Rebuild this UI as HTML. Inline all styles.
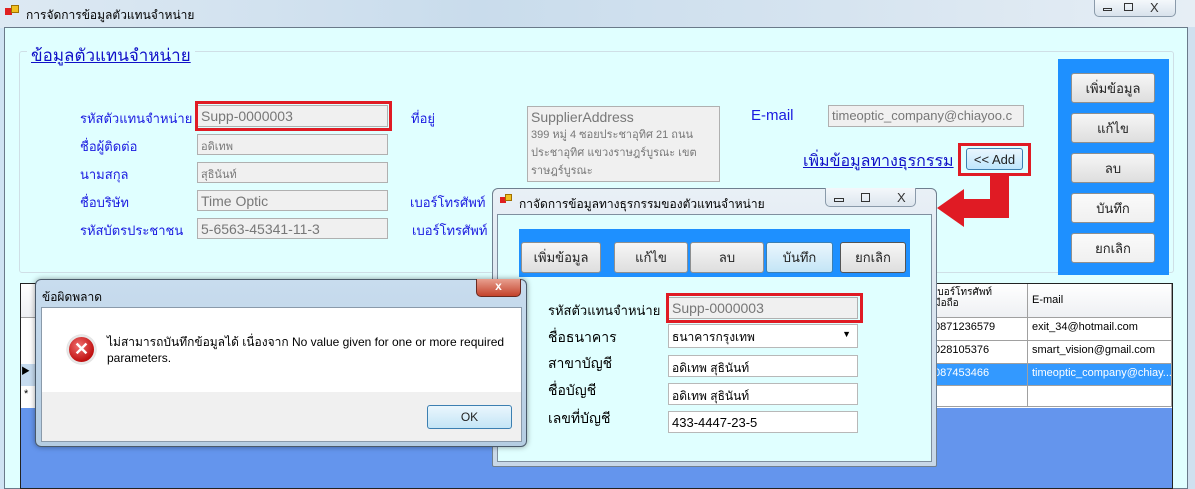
<!DOCTYPE html>
<html><head><meta charset="utf-8"><style>
*{box-sizing:border-box;margin:0;padding:0}
body{width:1195px;height:489px;overflow:hidden;position:relative;background:#cfe3f3;font-family:"Liberation Sans","Noto Sans CJK SC",sans-serif;font-size:13px}
.a{position:absolute}
.lbl{position:absolute;color:#1a1ae0;font-size:14px;white-space:nowrap}
.m{font-size:13px}
.tb{position:absolute;background:#f0f0f0;border:1px solid #b0b0b0;color:#777;font-size:13px;padding:2px 3px;white-space:nowrap;overflow:hidden}
.tw{position:absolute;background:#fff;border:1px solid #b8b8b8;color:#000;font-size:12px;padding:3px 3px;white-space:nowrap}
.btn{position:absolute;background:linear-gradient(#f6f6f6,#dedede);border:1px solid #8e8f8f;border-radius:3px;text-align:center;font-size:13px;color:#222;display:flex;align-items:center;justify-content:center}
.red{position:absolute;border:3px solid #e01b24}
.cell{position:absolute;border-right:1px solid #a0a0a0;border-bottom:1px solid #a0a0a0;font-size:11px;padding:3px 4px;white-space:nowrap;overflow:hidden;background:#fff}
</style></head><body>
<div class="a" style="left:0;top:0;width:1195px;height:28px;background:linear-gradient(90deg,#dde9f3,#c9dcec 40%,#d6e4f0 70%,#e6eef5)"></div>
<div class="a" style="top:8px;left:5px;width:7px;height:7px;background:#e02020"></div>
<div class="a" style="left:11px;top:5px;width:8px;height:8px;background:#f0c020;border:1px solid #a07000"></div>
<div class="a" style="left:26px;top:6px;font-size:12px;color:#000">การจัดการข้อมูลตัวแทนจำหน่าย</div>
<div class="a" style="left:1094px;top:0;width:82px;height:17px;border:1px solid #8a9aaa;border-top:none;border-radius:0 0 5px 5px;background:linear-gradient(#f4f8fb,#d8e2ec)"></div>
<div class="a" style="left:1103px;top:8px;width:9px;height:3px;border:1px solid #333"></div>
<div class="a" style="left:1124px;top:3px;width:9px;height:8px;border:1px solid #333"></div>
<div class="a" style="left:1150px;top:0;font-size:13px;color:#333">X</div>
<div class="a" style="left:4px;top:27px;width:1184px;height:462px;background:#e0ffff;border:1px solid #6a7a8a"></div>
<div class="a" style="left:1188px;top:27px;width:7px;height:462px;background:#cfe0ef"></div>
<div class="a" style="left:19px;top:51px;width:1155px;height:222px;border:1px solid #cfdfe6;border-radius:3px"></div>
<div class="a" style="left:27px;top:42px;padding:0 4px;background:#e0ffff;color:#1010c8;font-size:17px;text-decoration:underline">ข้อมูลตัวแทนจำหน่าย</div>
<div class="lbl m" style="left:80px;top:108px">รหัสตัวแทนจำหน่าย</div>
<div class="lbl m" style="left:80px;top:136px">ชื่อผู้ติดต่อ</div>
<div class="lbl m" style="left:80px;top:164px">นามสกุล</div>
<div class="lbl m" style="left:80px;top:192px">ชื่อบริษัท</div>
<div class="lbl m" style="left:80px;top:220px">รหัสบัตรประชาชน</div>
<div class="tb" style="left:197px;top:105px;width:191px;height:22px;font-size:14px">Supp-0000003</div>
<div class="red" style="left:195px;top:101px;width:197px;height:30px"></div>
<div class="tb" style="left:197px;top:134px;width:191px;height:21px;font-size:11px">อดิเทพ</div>
<div class="tb" style="left:197px;top:162px;width:191px;height:21px;font-size:11px">สุธินันท์</div>
<div class="tb" style="left:197px;top:190px;width:191px;height:21px;font-size:14px">Time Optic</div>
<div class="tb" style="left:197px;top:218px;width:191px;height:21px;font-size:14px">5-6563-45341-11-3</div>
<div class="lbl m" style="left:411px;top:108px">ที่อยู่</div>
<div class="lbl m" style="left:410px;top:192px">เบอร์โทรศัพท์</div>
<div class="lbl m" style="left:412px;top:220px">เบอร์โทรศัพท์</div>
<div class="tb" style="left:527px;top:106px;width:193px;height:76px;font-size:14px;white-space:normal;line-height:16px">SupplierAddress<br><span style="font-size:11px">399 หมู่ 4 ซอยประชาอุทิศ 21 ถนน ประชาอุทิศ แขวงราษฎร์บูรณะ เขต ราษฎร์บูรณะ</span></div>
<div class="lbl" style="left:751px;top:107px;font-size:15px">E-mail</div>
<div class="tb" style="left:828px;top:105px;width:196px;height:22px;font-size:13px">timeoptic_company@chiayoo.c</div>
<div class="a" style="left:803px;top:149px;color:#1010c8;font-size:16px;text-decoration:underline;white-space:nowrap">เพิ่มข้อมูลทางธุรกรรม</div>
<div class="red" style="left:958px;top:143px;width:73px;height:33px"></div>
<div class="btn" style="left:966px;top:148px;width:57px;height:22px;border-color:#3c7fb1;background:linear-gradient(#eaf6fd,#bee6fd);font-size:13px">&lt;&lt; Add</div>
<div class="a" style="left:990px;top:175px;width:19px;height:43px;background:#e01b24"></div>
<div class="a" style="left:962px;top:199px;width:47px;height:19px;background:#e01b24"></div>
<div class="a" style="left:937px;top:189px;width:0;height:0;border-top:19px solid transparent;border-bottom:19px solid transparent;border-right:27px solid #e01b24"></div>
<div class="a" style="left:1058px;top:59px;width:111px;height:216px;background:#1e90ff"></div>
<div class="btn" style="left:1071px;top:73px;width:84px;height:30px">เพิ่มข้อมูล</div>
<div class="btn" style="left:1071px;top:113px;width:84px;height:30px">แก้ไข</div>
<div class="btn" style="left:1071px;top:153px;width:84px;height:30px">ลบ</div>
<div class="btn" style="left:1071px;top:193px;width:84px;height:30px;background:linear-gradient(#fafafa,#f0f0f0)">บันทึก</div>
<div class="btn" style="left:1071px;top:233px;width:84px;height:30px;background:linear-gradient(#fafafa,#f0f0f0)">ยกเลิก</div>
<div class="a" style="left:20px;top:283px;width:1153px;height:206px;background:#6495ed;border:1px solid #222"></div>
<div class="a" style="left:21px;top:284px;width:1151px;height:34px;background:linear-gradient(#fff,#eef0f3);border-bottom:1px solid #a0a0a0"></div>
<div class="cell" style="left:930px;top:284px;width:98px;height:34px;background:transparent;font-size:10px;line-height:11px">เบอร์โทรศัพท์<br>มือถือ</div>
<div class="cell" style="left:1028px;top:284px;width:144px;height:34px;background:transparent;padding-top:10px">E-mail</div>
<div class="a" style="left:21px;top:318px;width:1151px;height:90px;background:#fff"></div>
<div class="cell" style="left:930px;top:318px;width:98px;height:23px">0871236579</div>
<div class="cell" style="left:1028px;top:318px;width:144px;height:23px">exit_34@hotmail.com</div>
<div class="cell" style="left:930px;top:341px;width:98px;height:23px">028105376</div>
<div class="cell" style="left:1028px;top:341px;width:144px;height:23px">smart_vision@gmail.com</div>
<div class="cell" style="left:930px;top:364px;width:98px;height:22px;background:#3399ff;color:#fff">087453466</div>
<div class="cell" style="left:1028px;top:364px;width:144px;height:22px;background:#3399ff;color:#fff">timeoptic_company@chiay...</div>
<div class="cell" style="left:930px;top:386px;width:98px;height:21px"></div>
<div class="cell" style="left:1028px;top:386px;width:144px;height:21px"></div>
<div class="a" style="left:21px;top:364px;width:14px;height:22px;background:#c7dcf0;font-size:9px">▶</div>
<div class="a" style="left:24px;top:388px;font-size:11px">*</div>
<div class="a" style="left:492px;top:188px;width:445px;height:279px;background:linear-gradient(#e9f0f6,#c8d8e8);border:1px solid #6f7f8f;border-radius:6px 6px 2px 2px"></div>
<div class="a" style="left:500px;top:197px;width:6px;height:6px;background:#e02020"></div>
<div class="a" style="left:505px;top:194px;width:7px;height:7px;background:#f0c020;border:1px solid #a07000"></div>
<div class="a" style="left:519px;top:195px;font-size:12px;color:#000;white-space:nowrap">กาจัดการข้อมูลทางธุรกรรมของตัวแทนจำหน่าย</div>
<div class="a" style="left:825px;top:188px;width:91px;height:19px;border:1px solid #8a9aaa;border-top:none;border-radius:0 0 5px 5px;background:linear-gradient(#f4f8fb,#dde6ee)"></div>
<div class="a" style="left:834px;top:198px;width:10px;height:4px;border:1px solid #333"></div>
<div class="a" style="left:861px;top:193px;width:9px;height:9px;border:1px solid #333"></div>
<div class="a" style="left:897px;top:190px;font-size:13px;color:#333">X</div>
<div class="a" style="left:497px;top:214px;width:435px;height:248px;background:#e0ffff;border:1px solid #7f8f9f"></div>
<div class="a" style="left:519px;top:229px;width:391px;height:48px;background:#1e90ff"></div>
<div class="btn" style="left:521px;top:242px;width:80px;height:31px">เพิ่มข้อมูล</div>
<div class="btn" style="left:614px;top:242px;width:74px;height:31px">แก้ไข</div>
<div class="btn" style="left:690px;top:242px;width:74px;height:31px">ลบ</div>
<div class="btn" style="left:766px;top:242px;width:67px;height:31px;border-color:#3c7fb1;background:linear-gradient(#eaf6fd,#c4e5f6)">บันทึก</div>
<div class="btn" style="left:840px;top:242px;width:66px;height:31px;border-color:#555">ยกเลิก</div>
<div class="lbl m" style="left:548px;top:300px;color:#000">รหัสตัวแทนจำหน่าย</div>
<div class="lbl" style="left:548px;top:327px;color:#000">ชื่อธนาคาร</div>
<div class="lbl" style="left:548px;top:353px;color:#000">สาขาบัญชี</div>
<div class="lbl" style="left:548px;top:380px;color:#000">ชื่อบัญชี</div>
<div class="lbl" style="left:548px;top:408px;color:#000">เลขที่บัญชี</div>
<div class="tb" style="left:668px;top:297px;width:190px;height:22px;font-size:14px">Supp-0000003</div>
<div class="red" style="left:666px;top:293px;width:197px;height:30px"></div>
<div class="tw" style="left:668px;top:324px;width:190px;height:24px">ธนาคารกรุงเทพ<span style="position:absolute;right:6px;top:4px;font-size:9px">▼</span></div>
<div class="tw" style="left:668px;top:355px;width:190px;height:22px">อดิเทพ สุธินันท์</div>
<div class="tw" style="left:668px;top:383px;width:190px;height:22px">อดิเทพ สุธินันท์</div>
<div class="tw" style="left:668px;top:411px;width:190px;height:22px;font-size:13px">433-4447-23-5</div>
<div class="a" style="left:35px;top:279px;width:492px;height:168px;background:linear-gradient(#c8dcee,#b5cde2);border:1px solid #4a5a6a;border-radius:6px;box-shadow:0 0 6px rgba(0,0,0,.4)"></div>
<div class="a" style="left:42px;top:288px;font-size:12px;color:#000">ข้อผิดพลาด</div>
<div class="a" style="left:476px;top:279px;width:45px;height:18px;background:linear-gradient(#e8a090,#c4432b);border:1px solid #6a2a20;border-top:none;border-radius:0 0 5px 5px;color:#fff;font-weight:bold;text-align:center;font-size:12px">x</div>
<div class="a" style="left:41px;top:307px;width:481px;height:135px;background:#f0f0f0;border:1px solid #8a9aaa"></div>
<div class="a" style="left:42px;top:308px;width:479px;height:84px;background:#fff"></div>
<div class="a" style="left:67px;top:335px;width:29px;height:29px;border-radius:50%;background:radial-gradient(circle at 40% 35%,#f07070,#c01010 70%);border:2px solid #e8e8e8;box-shadow:0 0 1px #777;color:#fff;font-weight:bold;font-size:18px;text-align:center;line-height:24px">✕</div>
<div class="a" style="left:107px;top:334px;font-size:12px;color:#000;line-height:16px;white-space:nowrap">ไม่สามารถบันทึกข้อมูลได้ เนื่องจาก No value given for one or more required<br>parameters.</div>
<div class="btn" style="left:427px;top:405px;width:85px;height:24px;border-color:#3c7fb1;background:linear-gradient(#eaf6fd,#c4e5f6);font-size:12px">OK</div>
</body></html>
